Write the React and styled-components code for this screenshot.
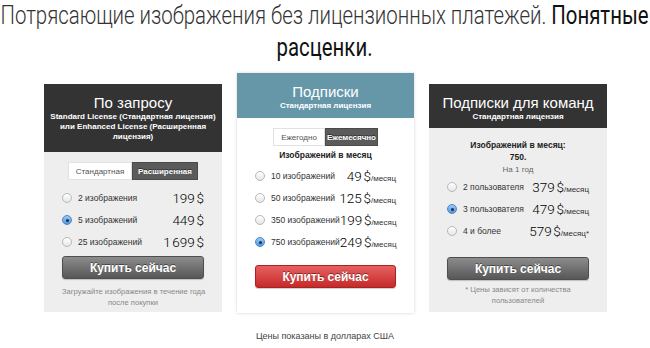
import React from 'react';
import styled, { createGlobalStyle } from 'styled-components';

const Global = createGlobalStyle`
  html, body { margin: 0; padding: 0; background: #fff; }
  body { font-family: "Liberation Sans", Arial, sans-serif; color: #333; }
`;

const Page = styled.div`
  width: 650px;
  height: 348px;
  overflow: hidden;
  display: flex;
  flex-direction: column;
`;

const TitleWrap = styled.div`
  display: flex;
  justify-content: center;
  height: 64px;
`;

const Title = styled.h1`
  flex: none;
  margin: 0;
  white-space: nowrap;
  transform: scaleX(0.815);
  transform-origin: center top;
  font-family: Roboto, "Liberation Sans", sans-serif;
  font-weight: 300;
  font-size: 25px;
  line-height: 32px;
  text-align: center;
  color: #333;
  strong { font-weight: 400; color: #111; }
`;

const Cards = styled.div`
  display: flex;
  align-items: flex-start;
  gap: 15px;
  padding-left: 44px;
  margin-top: 9px;
`;

const Card = styled.div`
  width: ${p => (p.$featured ? 177 : 178)}px;
  height: ${p => (p.$featured ? 240 : 228)}px;
  margin-top: ${p => (p.$featured ? 0 : 11)}px;
  background: ${p => (p.$featured ? '#fff' : '#eeeeee')};
  box-shadow: ${p => (p.$featured ? '0 0 3px rgba(0,0,0,0.18)' : 'none')};
  display: flex;
  flex-direction: column;
`;

const Header = styled.div`
  height: ${p => p.$h}px;
  box-sizing: border-box;
  padding: 10px 6px 0;
  background: ${p => p.$bg};
  color: #fff;
  text-align: center;
`;

const HeaderTitle = styled.div`
  font-size: 15px;
  line-height: 18px;
`;

const HeaderSub = styled.div`
  font-size: 8px;
  line-height: 10px;
  font-weight: bold;
`;

const Body = styled.div`
  padding: 0 18px;
  display: flex;
  flex-direction: column;
  align-items: stretch;
`;

const Toggle = styled.div`
  display: flex;
  align-self: center;
  margin-top: 10px;
  height: 18px;
`;

const Seg = styled.div`
  width: ${p => p.$w}px;
  box-sizing: border-box;
  display: flex;
  align-items: center;
  justify-content: center;
  font-size: 8px;
  background: ${p => (p.$active ? '#5b5b5b' : '#fff')};
  color: ${p => (p.$active ? '#fff' : '#555')};
  font-weight: ${p => (p.$active ? 'bold' : 'normal')};
  border: 1px solid ${p => (p.$active ? '#4a4a4a' : '#e2e2e2')};
  text-shadow: ${p => (p.$active ? '0 -1px 0 rgba(0,0,0,0.5)' : 'none')};
`;

const Heading = styled.div`
  font-size: 8.5px;
  line-height: 12px;
  font-weight: bold;
  color: #222;
  text-align: center;
  margin-top: ${p => p.$mt || 0}px;
`;

const Small = styled.div`
  font-size: 8px;
  line-height: 12px;
  color: #666;
  text-align: center;
  margin-top: 1px;
`;

const Rows = styled.div`
  display: flex;
  flex-direction: column;
  margin-top: ${p => p.$mt}px;
`;

const Row = styled.label`
  height: 22px;
  display: flex;
  align-items: center;
`;

const Radio = styled.span`
  width: 10px;
  height: 10px;
  box-sizing: border-box;
  border-radius: 50%;
  flex: none;
  position: relative;
  border: 1px solid ${p => (p.$on ? '#4a86c8' : '#b8b8b8')};
  background: ${p => (p.$on ? 'linear-gradient(#9cc8f2, #4f97e0)' : 'linear-gradient(#ffffff, #e6e6e6)')};
  &::after {
    content: '';
    display: ${p => (p.$on ? 'block' : 'none')};
    position: absolute;
    left: 2.5px;
    top: 2.5px;
    width: 3px;
    height: 3px;
    border-radius: 50%;
    background: #1c2f4a;
  }
`;

const Label = styled.span`
  flex: 1;
  font-size: 8.5px;
  color: #333;
  margin-left: 6px;
  white-space: nowrap;
`;

const Price = styled.span`
  font-family: Roboto, "Liberation Sans", sans-serif;
  font-weight: 300;
  font-size: 13.5px;
  letter-spacing: -0.2px;
  color: #000;
  white-space: nowrap;
  small {
    font-family: "Liberation Sans", Arial, sans-serif;
    font-size: 8px;
    letter-spacing: 0;
    color: #333;
  }
`;

const Button = styled.button`
  height: 23px;
  margin-top: ${p => p.$mt}px;
  border-radius: 3px;
  font-family: "Liberation Sans", Arial, sans-serif;
  font-size: 12px;
  font-weight: bold;
  color: #fff;
  text-shadow: 0 -1px 0 rgba(0,0,0,0.45);
  cursor: pointer;
  border: 1px solid ${p => (p.$red ? '#a92222' : '#4f4f4f')};
  background: ${p => (p.$red ? 'linear-gradient(#e86060, #c52a2a)' : 'linear-gradient(#8c8c8c, #575757)')};
  box-shadow: 0 1px 1px rgba(0,0,0,0.2);
  padding: 0;
`;

const Note = styled.div`
  font-size: 7.6px;
  line-height: 11px;
  color: #888;
  text-align: center;
  white-space: nowrap;
  margin-top: ${p => p.$mt}px;
`;

const Footer = styled.div`
  font-size: 9px;
  line-height: 12px;
  color: #444;
  text-align: center;
  margin-top: 17px;
`;

const NB = '\u202F';

function PriceTag({ value, per, star }) {
  return (
    <Price>
      {value}{NB}${per && <small>/месяц{star ? '*' : ''}</small>}
    </Price>
  );
}

export default function App() {
  return (
    <Page>
      <Global />
      <TitleWrap>
        <Title>
          Потрясающие изображения без лицензионных платежей. <strong>Понятные</strong><br />
          <strong>расценки.</strong>
        </Title>
      </TitleWrap>
      <Cards>
        <Card>
          <Header $bg="#333333" $h={68}>
            <HeaderTitle>По запросу</HeaderTitle>
            <HeaderSub>
              Standard License (Стандартная лицензия)<br />
              или Enhanced License (Расширенная<br />
              лицензия)
            </HeaderSub>
          </Header>
          <Body>
            <Toggle>
              <Seg $w={64}>Стандартная</Seg>
              <Seg $w={66} $active>Расширенная</Seg>
            </Toggle>
            <Rows $mt={7}>
              <Row><Radio /><Label>2 изображения</Label><PriceTag value="199" /></Row>
              <Row><Radio $on /><Label>5 изображений</Label><PriceTag value="449" /></Row>
              <Row><Radio /><Label>25 изображений</Label><PriceTag value={`1${NB}699`} /></Row>
            </Rows>
            <Button $mt={3}>Купить сейчас</Button>
            <Note $mt={7}>Загружайте изображения в течение года<br />после покупки</Note>
          </Body>
        </Card>

        <Card $featured>
          <Header $bg="#6597a9" $h={45}>
            <HeaderTitle>Подписки</HeaderTitle>
            <HeaderSub>Стандартная лицензия</HeaderSub>
          </Header>
          <Body>
            <Toggle>
              <Seg $w={52}>Ежегодно</Seg>
              <Seg $w={53} $active>Ежемесячно</Seg>
            </Toggle>
            <Heading $mt={3}>Изображений в месяц</Heading>
            <Rows $mt={4}>
              <Row><Radio /><Label>10 изображений</Label><PriceTag value="49" per /></Row>
              <Row><Radio /><Label>50 изображений</Label><PriceTag value="125" per /></Row>
              <Row><Radio /><Label>350 изображений</Label><PriceTag value="199" per /></Row>
              <Row><Radio $on /><Label>750 изображений</Label><PriceTag value="249" per /></Row>
            </Rows>
            <Button $mt={12} $red>Купить сейчас</Button>
          </Body>
        </Card>

        <Card>
          <Header $bg="#333333" $h={44}>
            <HeaderTitle>Подписки для команд</HeaderTitle>
            <HeaderSub>Стандартная лицензия</HeaderSub>
          </Header>
          <Body>
            <Heading $mt={11}>Изображений в месяц:<br />750.</Heading>
            <Small>На 1 год</Small>
            <Rows $mt={0}>
              <Row><Radio /><Label>2 пользователя</Label><PriceTag value="379" per /></Row>
              <Row><Radio $on /><Label>3 пользователя</Label><PriceTag value="479" per /></Row>
              <Row><Radio /><Label>4 и более</Label><PriceTag value="579" per star /></Row>
            </Rows>
            <Button $mt={15}>Купить сейчас</Button>
            <Note $mt={4}>* Цены зависят от количества<br />пользователей</Note>
          </Body>
        </Card>
      </Cards>
      <Footer>Цены показаны в долларах США</Footer>
    </Page>
  );
}
